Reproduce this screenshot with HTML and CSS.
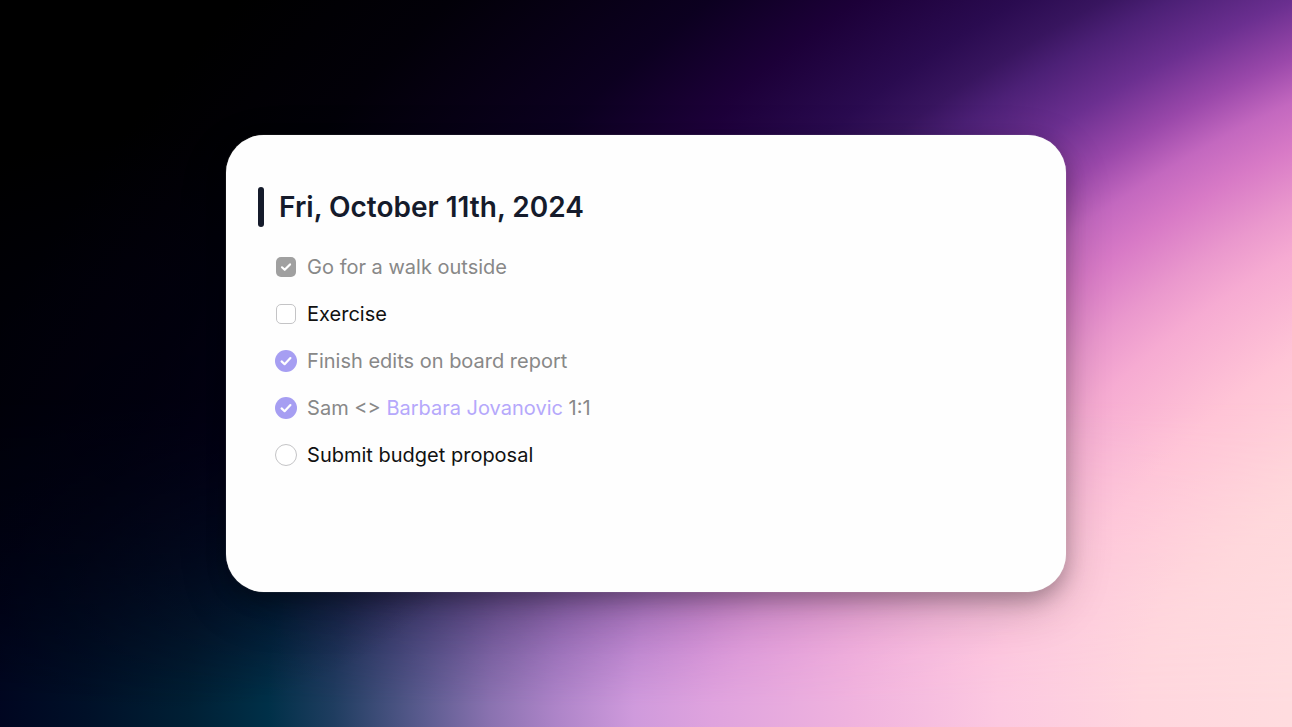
FILE: index.html
```html
<!DOCTYPE html>
<html lang="en">
<head>
<meta charset="utf-8">
<meta name="viewport" content="width=device-width, initial-scale=1">
<title>Fri, October 11th, 2024</title>
<link rel="stylesheet" href="styles.css">
</head>
<body class="page">
<main class="card">
  <h1 class="title">Fri, October 11th, 2024</h1>
  <ul class="list">
    <li class="item">
      <span class="mark"><input class="box" type="checkbox" id="walk" checked><svg class="tick" viewBox="0 0 22 22" aria-hidden="true"><path d="M7 11.3 9.7 13.8 15 8.4"/></svg></span>
      <label class="text" for="walk">Go for a walk outside</label>
    </li>
    <li class="item">
      <span class="mark"><input class="box" type="checkbox" id="exercise"></span>
      <label class="text" for="exercise">Exercise</label>
    </li>
    <li class="item">
      <span class="mark"><input class="box round" type="checkbox" id="edits" checked><svg class="tick" viewBox="0 0 22 22" aria-hidden="true"><path d="M6.6 11.4 9.6 14.2 15.4 8.1"/></svg></span>
      <label class="text" for="edits">Finish edits on board report</label>
    </li>
    <li class="item">
      <span class="mark"><input class="box round" type="checkbox" id="sam" checked><svg class="tick" viewBox="0 0 22 22" aria-hidden="true"><path d="M6.6 11.4 9.6 14.2 15.4 8.1"/></svg></span>
      <label class="text" for="sam">Sam &lt;&gt; <a class="person" href="#barbara">Barbara Jovanovic</a> 1:1</label>
    </li>
    <li class="item">
      <span class="mark"><input class="box round" type="checkbox" id="budget"></span>
      <label class="text" for="budget">Submit budget proposal</label>
    </li>
  </ul>
</main>
</body>
</html>
```

FILE: styles.css
```css
* {
  box-sizing: border-box;
}

.page {
  position: relative;
  isolation: isolate;
  margin: 0;
  min-height: 100vh;
  display: flex;
  align-items: center;
  justify-content: center;
  font-family: Inter, "Liberation Sans", sans-serif;
  background: radial-gradient(101% 131% at 155% 124%,
    #ffdcdf 57%, #ffd8da 69%, #ffc4d6 79%, #f6abd2 87%, #ea98cd 91%,
    #d87ac6 96%, #c368bf 100%, #9a48aa 104%, #6b2f90 109%, #4c2076 114%,
    #38155f 117%, #2a0b50 121%, #1c0038 129%, #0c0020 137%, #020008 152%, #000 165%);
}

/* Cooler palette that fades in towards the bottom */
.page::before {
  content: "";
  position: absolute;
  inset: 0;
  z-index: -1;
  background: radial-gradient(101% 93% at 147% 96%,
    #ffdcdf 47%, #ffd6de 58%, #fcc8e0 69%, #f0b3de 80%, #dfa3de 91%,
    #cf9adc 97%, #ad84c8 103%, #8a72b0 108%, #5c5c90 113%, #1f3d60 120%,
    #003048 125%, #002035 131%, #001028 139%, #000520 146%, #000010 160%);
  mask-image: linear-gradient(transparent 55%, #000 97%);
}

/* Darker pool along the left side */
.page::after {
  content: "";
  position: absolute;
  inset: 0;
  z-index: -1;
  background: radial-gradient(28% 40% at 12% 58%,
    rgba(0, 0, 18, 0.6), rgba(0, 0, 18, 0.4) 50%, rgba(0, 0, 18, 0));
}

.card {
  width: 65%;
  padding: 52px 32px 114px;
  border-radius: 38px;
  background: #fefefe;
  box-shadow: 0 0 1px rgba(255, 255, 255, 0.6), 0 8px 20px rgba(0, 0, 0, 0.24), 0 16px 48px rgba(0, 0, 0, 0.2);
}

.title {
  display: flex;
  align-items: center;
  gap: 15px;
  margin: 0 0 16px;
  font-size: 28px;
  font-weight: 600;
  line-height: 40px;
  color: #151b2b;
}

.title::before {
  content: "";
  width: 6px;
  height: 40px;
  border-radius: 3px;
  background: #151b2b;
}

.list {
  margin: 0;
  padding: 0 0 0 17px;
  list-style: none;
}

.item {
  display: flex;
  align-items: center;
  gap: 10px;
  min-height: 47px;
  font-size: 20px;
  line-height: 28px;
  color: #111;
}

.item:has(.box:checked) {
  color: #888;
}

.mark {
  display: grid;
  place-items: center;
  width: 22px;
  height: 22px;
}

.box {
  appearance: none;
  grid-area: 1 / 1;
  width: 20px;
  height: 20px;
  margin: 0;
  border: 1px solid #c4c4c6;
  border-radius: 5px;
  background: #fff;
}

.box:checked {
  border: 0;
  background: #a0a0a0;
}

.round {
  width: 22px;
  height: 22px;
  border-radius: 50%;
}

.round:checked {
  background: #a69ef2;
}

.tick {
  grid-area: 1 / 1;
  width: 22px;
  height: 22px;
  pointer-events: none;
  fill: none;
  stroke: #fff;
  stroke-width: 2.2;
  stroke-linecap: round;
  stroke-linejoin: round;
}

.person {
  color: #b5a8fb;
  text-decoration: none;
}
```
